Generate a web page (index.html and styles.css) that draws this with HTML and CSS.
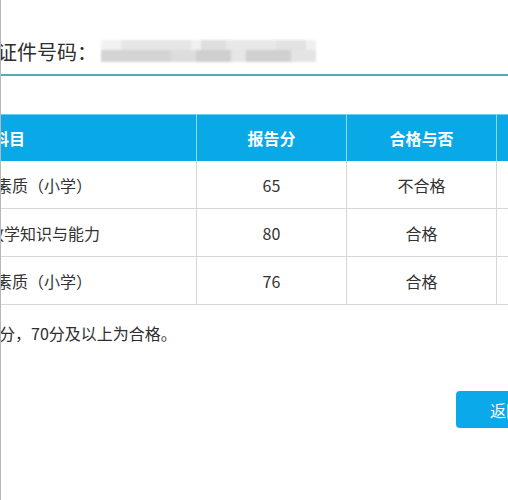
FILE: index.html
```html
<!DOCTYPE html>
<html lang="zh-CN">
<head>
<meta charset="utf-8">
<title>成绩查询</title>
<link rel="stylesheet" href="styles.css">
</head>
<body>
<div class="frame">
  <div class="content">
    <div class="info">
      <span class="label">证件号码：</span>
      <span class="masked"><span class="m-top"></span><span class="m-bottom"></span></span>
    </div>
    <div class="grid">
      <div class="cell head first">科目</div>
      <div class="cell head">报告分</div>
      <div class="cell head">合格与否</div>
      <div class="cell head">备注</div>

      <div class="cell">综合素质（小学）</div>
      <div class="cell">65</div>
      <div class="cell">不合格</div>
      <div class="cell"></div>

      <div class="cell">教育教学知识与能力</div>
      <div class="cell">80</div>
      <div class="cell">合格</div>
      <div class="cell"></div>

      <div class="cell">综合素质（小学）</div>
      <div class="cell">76</div>
      <div class="cell">合格</div>
      <div class="cell"></div>
    </div>
    <p class="note"><span class="cut">各科满分为120</span>分，70分及以上为合格。</p>
    <div class="actions">
      <button class="btn" type="button">返回</button>
    </div>
  </div>
</div>
</body>
</html>
```

FILE: styles.css
```css
html, body {
  margin: 0;
  padding: 0;
  background: #ffffff;
}

body {
  width: 508px;
  height: 500px;
  overflow: hidden;
  font-family: "Noto Sans CJK SC", "Noto Sans", sans-serif;
  color: #333333;
}

.frame {
  height: 500px;
  border-left: 1px solid #b8b8b8;
  overflow: hidden;
}

.content {
  margin-left: -141px;
  width: 900px;
}

.info {
  height: 36px;
  padding-top: 38px;
  padding-left: 137px;
  border-bottom: 2px solid #5ea8b6;
  display: flex;
  align-items: flex-start;
  font-size: 20px;
  line-height: 28px;
  color: #2e2e2e;
}

.masked {
  display: flex;
  flex-direction: column;
  width: 215px;
  height: 22px;
  margin-left: 4px;
  margin-top: 2px;
  filter: blur(1.2px);
}

.m-top {
  height: 10px;
  background: linear-gradient(to right,
    #f2f2f2 0, #f2f2f2 20px,
    #e6e6e6 20px, #e6e6e6 90px,
    #f0f0f0 90px, #f0f0f0 100px,
    #dedede 100px, #dedede 125px,
    #e8e8e8 125px, #e8e8e8 175px,
    #e2e2e2 175px, #e2e2e2 205px,
    #f0f0f0 205px);
}

.m-bottom {
  height: 12px;
  background: linear-gradient(to right,
    #d4d4d4 0, #d4d4d4 70px,
    #dddddd 70px, #dddddd 95px,
    #cfcfcf 95px, #cfcfcf 130px,
    #e6e6e6 130px, #e6e6e6 145px,
    #d0d0d0 145px, #d0d0d0 190px,
    #e4e4e4 190px, #e4e4e4 215px);
}

.grid {
  margin-top: 38px;
  display: grid;
  grid-template-columns: 337px 150px 150px 150px;
  grid-template-rows: 47px 48px 48px 48px;
  width: 787px;
}

.cell {
  box-sizing: border-box;
  border-right: 1px solid #d6d6d6;
  border-bottom: 1px solid #d6d6d6;
  display: flex;
  align-items: center;
  justify-content: center;
  font-size: 16px;
  color: #333333;
}

.cell.head {
  background: #09a8e6;
  border-top: 1px solid #6fcdf2;
  border-bottom: 0;
  border-right: 1px solid #8fd8f4;
  color: #ffffff;
  font-weight: 700;
}

.cell.head.first {
  justify-content: flex-start;
  padding-left: 133px;
}

.note {
  margin: 16px 0 0 0;
  font-size: 16px;
  line-height: 24px;
  color: #2e2e2e;
}

.cut {
  display: inline-block;
  vertical-align: top;
  width: 139px;
  text-align: right;
  white-space: nowrap;
  overflow: hidden;
}

.actions {
  margin-top: 46px;
  padding-left: 596px;
}

.btn {
  display: block;
  width: 100px;
  height: 37px;
  border: 0;
  border-radius: 4px;
  background: #0aa9e9;
  color: #ffffff;
  font-family: "Noto Sans CJK SC", "Noto Sans", sans-serif;
  font-size: 16px;
  padding: 0;
}
```
